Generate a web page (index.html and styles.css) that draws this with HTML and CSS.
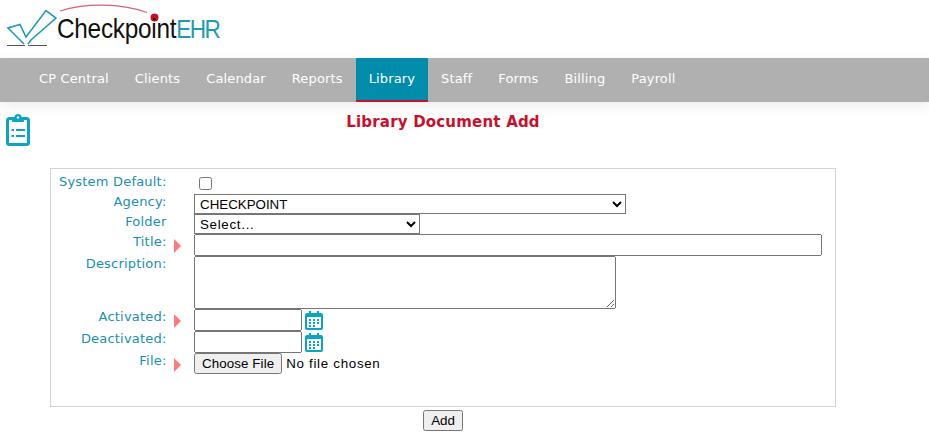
FILE: index.html
```html
<!DOCTYPE html>
<html lang="en">
<head>
<meta charset="utf-8">
<title>Library Document Add</title>
<link rel="stylesheet" href="styles.css">
</head>
<body>
<header class="brand">
  <div class="logo">
    <svg class="logo-art" width="160" height="50" viewBox="0 0 160 50" aria-hidden="true">
      <path d="M24 44 L8 28 L20 24.500 L26 37 L46 10.500 L56 18 L31 40 L28 44" fill="none" stroke="#1f9ab5" stroke-width="1.600"/>
      <path d="M7 45.500 H25 M28 45.500 H47" stroke="#555" stroke-width="1.200"/>
      <path d="M60 11 C85 3 120 3 147 12.500" fill="none" stroke="#d4637a" stroke-width="1.200"/>
      <circle cx="154.500" cy="17.500" r="4" fill="#c8102e"/>
    </svg>
    <span class="logo-text">Checkpoint<span class="logo-ehr">EHR</span></span>
  </div>
</header>
<nav class="nav">
  <a class="nav-item">CP Central</a>
  <a class="nav-item">Clients</a>
  <a class="nav-item">Calendar</a>
  <a class="nav-item">Reports</a>
  <a class="nav-item active">Library</a>
  <a class="nav-item">Staff</a>
  <a class="nav-item">Forms</a>
  <a class="nav-item">Billing</a>
  <a class="nav-item">Payroll</a>
</nav>
<main class="main">
  <div class="head">
    <svg class="clip" width="24" height="32" viewBox="0 0 24 32" aria-hidden="true">
      <rect x="1.500" y="4.500" width="21" height="26" rx="2" fill="#fff" stroke="#0aa5c4" stroke-width="3"/>
      <circle cx="12" cy="3.500" r="3.500" fill="#0aa5c4"/>
      <rect x="6" y="3" width="12" height="5" rx="1" fill="#0aa5c4"/>
      <circle cx="12" cy="3.500" r="1.200" fill="#fff"/>
      <path d="M5.500 16 H8 M10 16 H19 M5.500 22 H8 M10 22 H19" stroke="#0aa5c4" stroke-width="2"/>
    </svg>
    <h1 class="title">Library Document Add</h1>
  </div>
  <form class="panel">
    <div class="label">System Default:</div><div></div>
    <div class="control"><input class="check" type="checkbox"></div>

    <div class="label">Agency:</div><div></div>
    <div class="control"><select class="sel sel-agency"><option>CHECKPOINT</option></select></div>

    <div class="label">Folder</div><div></div>
    <div class="control"><select class="sel sel-folder"><option>Select...</option></select></div>

    <div class="label">Title:</div><div class="req"></div>
    <div class="control"><input class="text text-title" type="text"></div>

    <div class="label">Description:</div><div></div>
    <div class="control"><textarea class="desc"></textarea></div>

    <div class="label">Activated:</div><div class="req"></div>
    <div class="control date"><input class="text text-date" type="text">
      <svg class="cal" width="18" height="20" viewBox="0 0 18 20" aria-hidden="true">
        <path d="M2 3 H4 V1 H6 V3 H12 V1 H14 V3 H16 Q18 3 18 5 V18 Q18 20 16 20 H2 Q0 20 0 18 V5 Q0 3 2 3 Z" fill="#0aa5c4"/>
        <rect x="2" y="7" width="14" height="11" fill="#fff"/>
        <path d="M4 9 H6 V11 H4 Z M8 9 H10 V11 H8 Z M12 9 H14 V11 H12 Z M4 12 H6 V14 H4 Z M8 12 H10 V14 H8 Z M12 12 H14 V14 H12 Z M8 15 H10 V17 H8 Z M4 15 H6 V17 H4 Z" fill="#0aa5c4"/>
      </svg>
    </div>

    <div class="label">Deactivated:</div><div></div>
    <div class="control date"><input class="text text-date" type="text">
      <svg class="cal" width="18" height="20" viewBox="0 0 18 20" aria-hidden="true">
        <path d="M2 3 H4 V1 H6 V3 H12 V1 H14 V3 H16 Q18 3 18 5 V18 Q18 20 16 20 H2 Q0 20 0 18 V5 Q0 3 2 3 Z" fill="#0aa5c4"/>
        <rect x="2" y="7" width="14" height="11" fill="#fff"/>
        <path d="M4 9 H6 V11 H4 Z M8 9 H10 V11 H8 Z M12 9 H14 V11 H12 Z M4 12 H6 V14 H4 Z M8 12 H10 V14 H8 Z M12 12 H14 V14 H12 Z M8 15 H10 V17 H8 Z M4 15 H6 V17 H4 Z" fill="#0aa5c4"/>
      </svg>
    </div>

    <div class="label">File:</div><div class="req"></div>
    <div class="control"><input class="file" type="file"></div>
  </form>
  <div class="actions"><button class="add" type="button">Add</button></div>
</main>
</body>
</html>
```

FILE: styles.css
```css
html, body {
  margin: 0;
  padding: 0;
  background: #fff;
}
body {
  font-family: "DejaVu Sans", Verdana, sans-serif;
  font-size: 13px;
  overflow: hidden;
}
.brand {
  height: 58px;
}
.logo {
  display: flex;
  height: 58px;
  position: relative;
}
.logo-art {
  flex: none;
}
.logo-text {
  position: absolute;
  left: 57px;
  top: 10px;
  font-family: "Liberation Sans", Arial, sans-serif;
  font-size: 28px;
  line-height: 38px;
  letter-spacing: -0.3px;
  color: #111;
  white-space: nowrap;
  transform: scaleX(0.87);
  transform-origin: left center;
}
.logo-ehr {
  color: #1f9ab5;
  font-size: 26px;
  letter-spacing: -1.8px;
}
.nav {
  display: flex;
  height: 44px;
  padding-left: 26px;
  background: #b0b0b0;
  box-shadow: 0 4px 14px rgba(0, 0, 0, 0.08);
}
.nav-item {
  box-sizing: border-box;
  height: 44px;
  padding: 0 13px;
  line-height: 42px;
  color: #fff;
  font-size: 13px;
  letter-spacing: 0.14px;
}
.nav-item.active {
  background: #008caa;
  border-bottom: 2px solid #c8102e;
}
.head {
  display: grid;
  grid-template-columns: 50px 786px;
  height: 66px;
}
.clip {
  margin: 12px 0 0 6px;
}
.title {
  margin: 10px 0 0;
  font-size: 15px;
  line-height: 20px;
  font-weight: bold;
  letter-spacing: 0.2px;
  text-align: center;
  color: #c8102e;
}
.panel {
  display: grid;
  grid-template-columns: 115.5px 27.5px 1fr;
  grid-auto-rows: min-content;
  box-sizing: border-box;
  width: 786px;
  height: 239px;
  margin-left: 50px;
  padding: 5px 0 0;
  border: 1px solid #d3d3d3;
}
.label {
  text-align: right;
  color: #1a8fb0;
  font-size: 13px;
  line-height: 16px;
  letter-spacing: 0.2px;
}
.req {
  width: 0;
  height: 0;
  margin: 5px 0 0 7.5px;
  border-left: 7px solid #ff7b80;
  border-top: 7px solid transparent;
  border-bottom: 7px solid transparent;
}
.control {
  min-width: 0;
}
.date {
  display: flex;
  align-items: flex-start;
}
.check {
  display: block;
  width: 13px;
  height: 13px;
  margin: 3px 0 4px 5px;
}
.sel {
  display: block;
  box-sizing: border-box;
  height: 20px;
  margin: 0;
  padding: 0 0 0 1px;
  font-family: "Liberation Sans", Arial, sans-serif;
  font-size: 13.333px;
  background: #fff;
  color: #000;
}
.sel-agency {
  width: 432px;
}
.sel-folder {
  width: 226px;
  letter-spacing: 0.7px;
}
.text {
  display: block;
  box-sizing: border-box;
  height: 22px;
  margin: 0;
  font-family: "Liberation Sans", Arial, sans-serif;
  font-size: 13.333px;
}
.text-title {
  width: 628px;
}
.text-date {
  width: 108px;
}
.desc {
  display: block;
  box-sizing: border-box;
  width: 422px;
  height: 53px;
  margin: 0;
  font-family: "Liberation Sans", Arial, sans-serif;
  font-size: 13.333px;
}
.cal {
  margin: 1px 0 0 3px;
}
.file {
  display: block;
  height: 22px;
  margin: 0;
  font-family: "Liberation Sans", Arial, sans-serif;
  font-size: 13.333px;
  letter-spacing: 0.7px;
  color: #000;
}
.file::file-selector-button {
  letter-spacing: 0.1px;
}
.actions {
  width: 786px;
  margin: 3px 0 0 50px;
  text-align: center;
}
.add {
  box-sizing: border-box;
  height: 21px;
  padding: 1px 6px;
  font-family: "Liberation Sans", Arial, sans-serif;
  font-size: 13.333px;
}
```
